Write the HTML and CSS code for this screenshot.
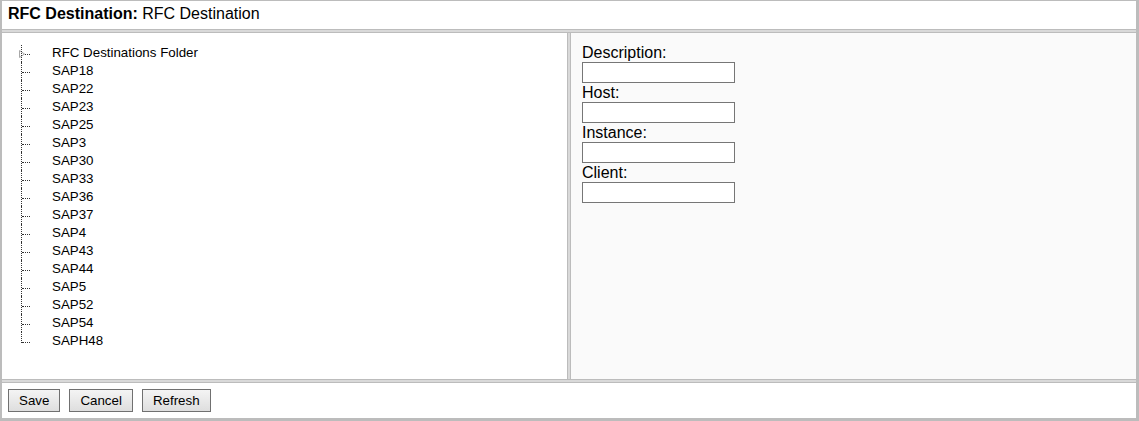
FILE: index.html
```html
<!DOCTYPE html>
<html lang="en">
<head>
    <meta charset="UTF-8">
    <title>RFC Destination</title>
    <link rel="stylesheet" href="styles.css">
</head>
<body>
<div class="frameset">
    <div class="header">
        <b>RFC Destination:</b> RFC Destination
    </div>
    <div class="hsplit"></div>
    <div class="main">
        <div class="left">
            <ul class="tree">
                <li class="first">
                    <svg class="arrow" width="6" height="8" viewBox="0 0 6 8"><polygon points="0.5,0.5 5.5,4 0.5,7.5" fill="#fff" stroke="#a8a8a8" stroke-width="1"/></svg>
                    RFC Destinations Folder
                </li>
                <li>SAP18</li>
                <li>SAP22</li>
                <li>SAP23</li>
                <li>SAP25</li>
                <li>SAP3</li>
                <li>SAP30</li>
                <li>SAP33</li>
                <li>SAP36</li>
                <li>SAP37</li>
                <li>SAP4</li>
                <li>SAP43</li>
                <li>SAP44</li>
                <li>SAP5</li>
                <li>SAP52</li>
                <li>SAP54</li>
                <li class="last">SAPH48</li>
            </ul>
        </div>
        <div class="vsplit"></div>
        <div class="right">
            <label class="label">Description:</label>
            <input type="text" class="textfield">
            <label class="label">Host:</label>
            <input type="text" class="textfield">
            <label class="label">Instance:</label>
            <input type="text" class="textfield">
            <label class="label">Client:</label>
            <input type="text" class="textfield">
        </div>
    </div>
    <div class="hsplit"></div>
    <div class="footer">
        <input type="button" class="btn" value="Save">
        <input type="button" class="btn" value="Cancel">
        <input type="button" class="btn" value="Refresh">
    </div>
</div>
</body>
</html>
```
FILE: styles.css
```css
* {
    margin: 0;
    padding: 0;
    box-sizing: border-box;
}
body {
    font-family: "Liberation Sans", Arial, sans-serif;
    color: #000;
}
.frameset {
    width: 1139px;
    height: 421px;
    background: #bcbcbc;
    padding: 1px 3px 3px 2px;
    display: flex;
    flex-direction: column;
}
.header {
    height: 28px;
    background: #fff;
    padding: 4px 6px 0;
    font-size: 16px;
    line-height: 18px;
    white-space: nowrap;
}
.hsplit {
    height: 4px;
    background: #d9d9d9;
    border-top: 1px solid #bcbcbc;
    border-bottom: 1px solid #bcbcbc;
}
.main {
    height: 346px;
    display: flex;
}
.left {
    width: 565px;
    background: #fff;
    padding-top: 11px;
}
.vsplit {
    width: 4px;
    background: #d9d9d9;
    border-left: 1px solid #bcbcbc;
    border-right: 1px solid #bcbcbc;
}
.right {
    flex: 1;
    background: #fafafa;
    padding: 10px 11px;
}
.tree {
    list-style: none;
    margin-left: 19px;
    font-size: 13.33px;
}
.tree li {
    position: relative;
    height: 18px;
    line-height: 18px;
    padding-left: 31px;
    white-space: nowrap;
}
.tree li::before {
    content: "";
    position: absolute;
    left: 1px;
    top: 10px;
    width: 8px;
    border-top: 1px dotted #333;
}
.tree li::after {
    content: "";
    position: absolute;
    left: 0;
    top: 0;
    height: 18px;
    border-left: 1px dotted #333;
}
.tree li.first::after {
    top: 1px;
    height: 17px;
}
.tree li.last::after {
    height: 11px;
}
.tree .arrow {
    position: absolute;
    left: -2px;
    top: 6px;
}
.label {
    display: block;
    font-size: 16px;
    line-height: 19px;
}
.textfield {
    display: block;
    width: 153px;
    height: 21px;
    border: 1px solid #767676;
    background: #fff;
    font-size: 13px;
}
.footer {
    height: 35px;
    background: #fff;
    padding: 6px 6px 0;
    display: flex;
    gap: 9px;
    align-items: flex-start;
}
.btn {
    height: 23px;
    padding: 0 10px;
    border: 1px solid #707070;
    background: linear-gradient(#f4f4f4, #dedede);
    font-family: "Liberation Sans", Arial, sans-serif;
    font-size: 13.33px;
    color: #000;
}
```
